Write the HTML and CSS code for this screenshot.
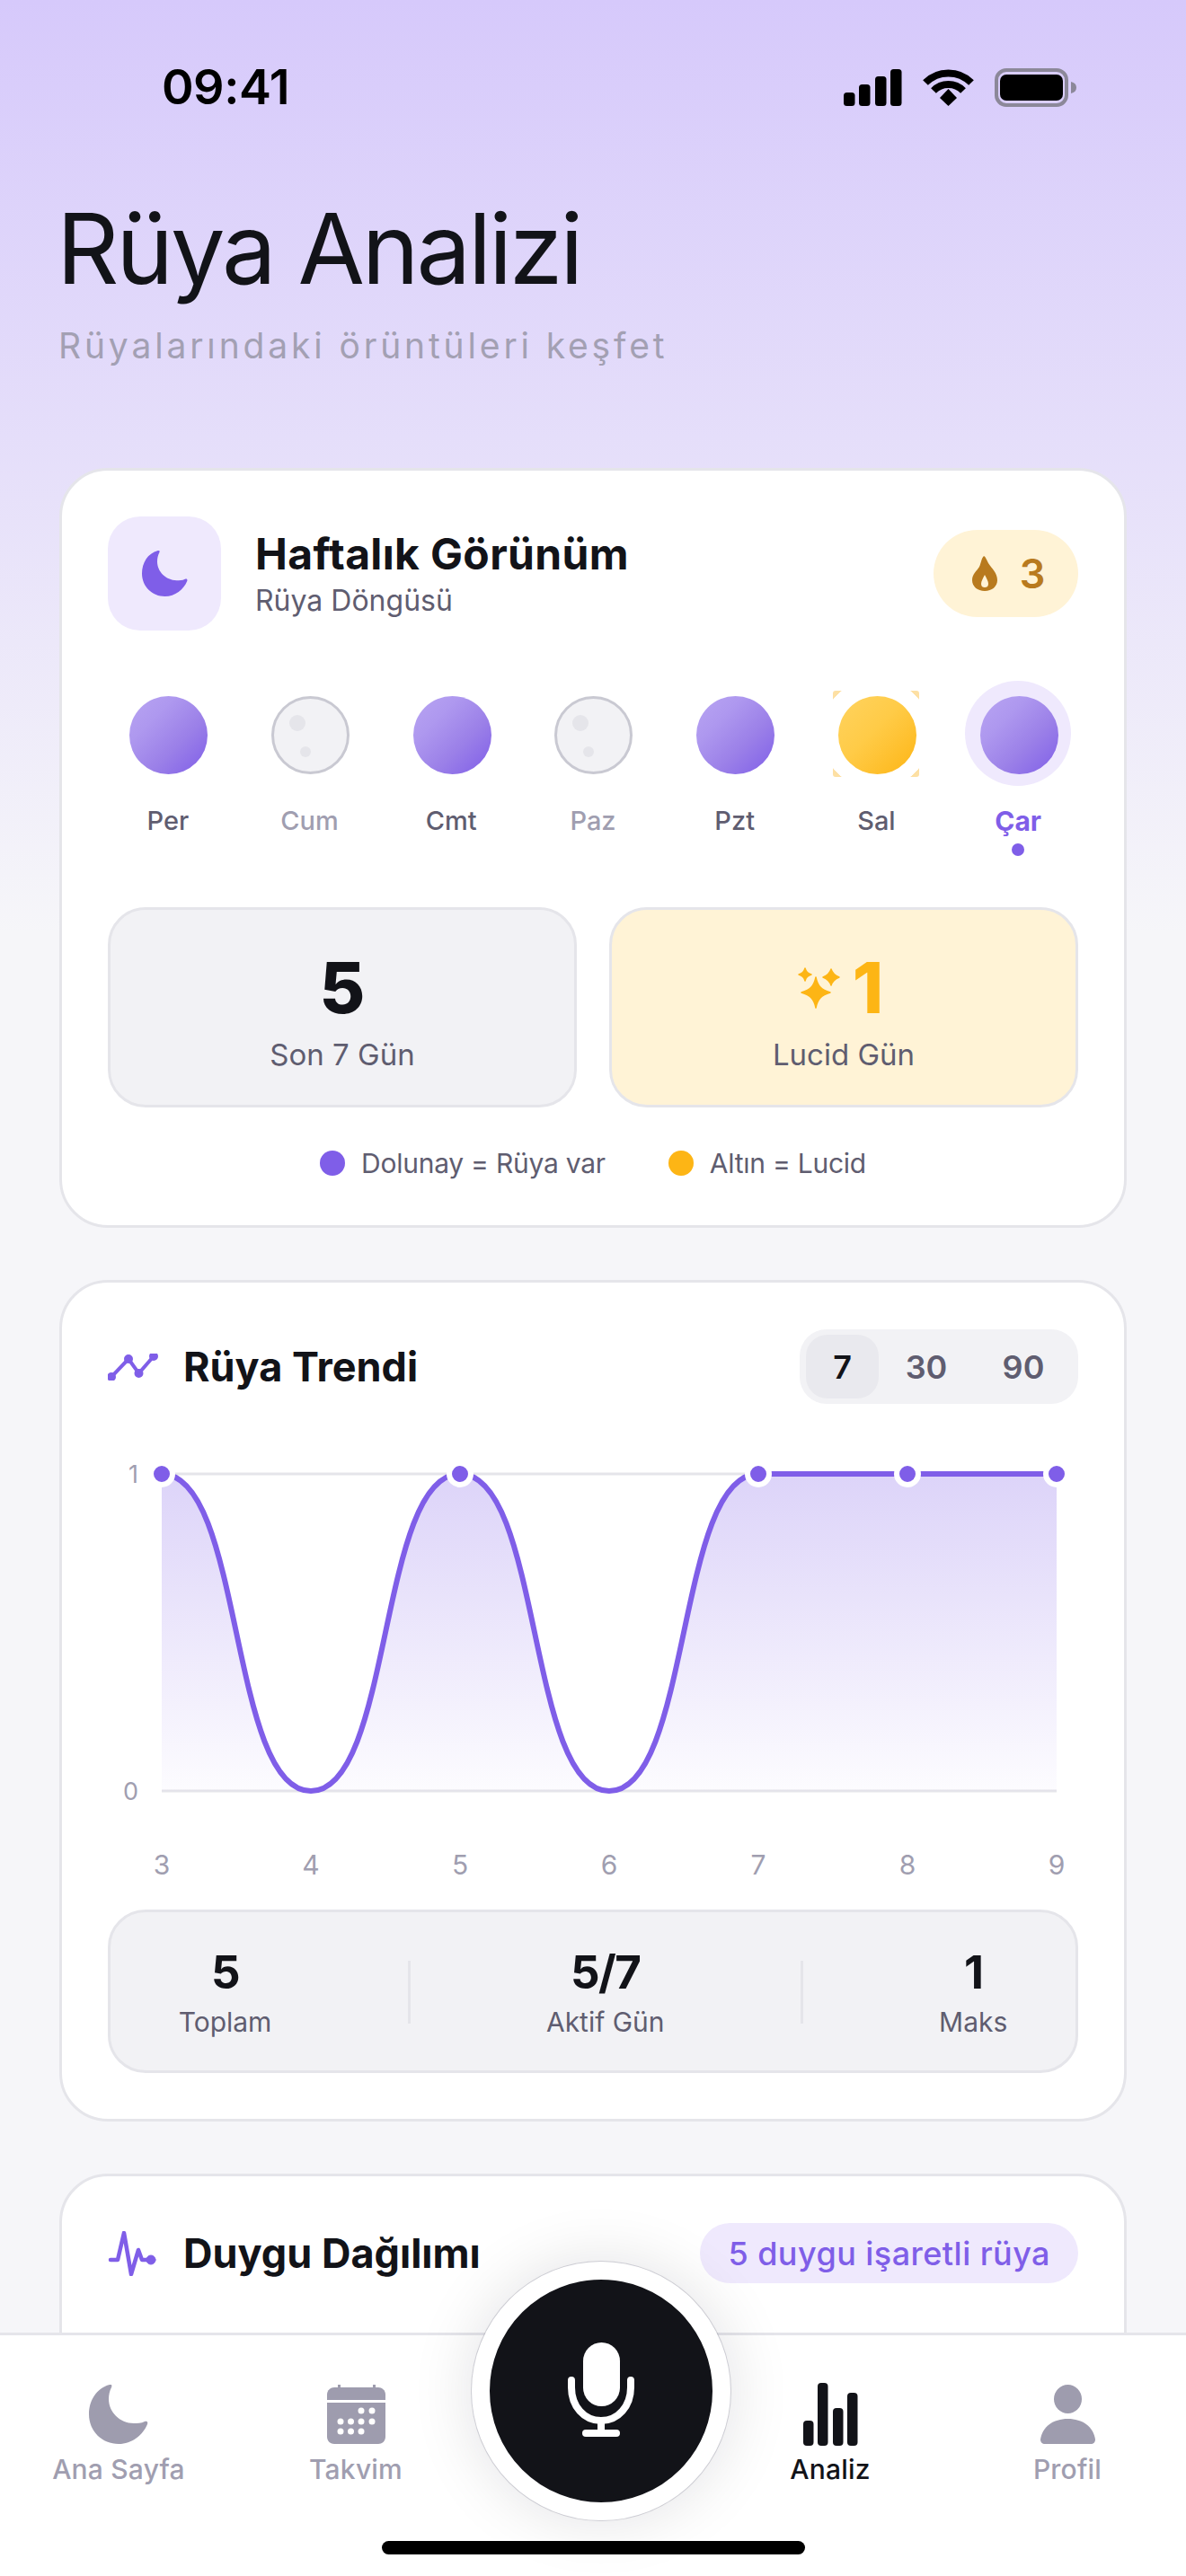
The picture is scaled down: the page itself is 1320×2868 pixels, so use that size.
FILE: index.html
```html
<!DOCTYPE html>
<html lang="tr">
<head>
  <meta charset="UTF-8" />
  <meta name="viewport" content="width=device-width, initial-scale=1" />
  <title>Rüya Analizi</title>
  <link rel="stylesheet" href="styles.css">
</head>
<body>
  <div class="screen">
    <div class="status-bar">
      <span class="time">09:41</span>
      <div class="status-icons">
        <svg width="65" height="41" viewBox="0 0 65 41" fill="#000">
          <rect x="0" y="26" width="12.5" height="15" rx="3.5"/>
          <rect x="17" y="17" width="12.5" height="24" rx="3.5"/>
          <rect x="35" y="8" width="12.5" height="33" rx="3.5"/>
          <rect x="52" y="0" width="12.5" height="41" rx="3.5"/>
        </svg>
        <svg width="57" height="41" viewBox="0 0 57 41" fill="none" stroke="#000" stroke-width="8">
          <path d="M3 15 A36 36 0 0 1 54 15"/>
          <path d="M12 24 A23 23 0 0 1 45 24"/>
          <path d="M19 32 L28.5 22 L38 32 L28.5 41 Z" fill="#000" stroke="none"/>
        </svg>
        <svg class="battery" width="91" height="43" viewBox="0 0 91 43">
          <rect x="2" y="2" width="78" height="39" rx="11" fill="none" stroke="#8c8899" stroke-width="4"/>
          <rect x="6" y="7" width="70" height="29" rx="7" fill="#000"/>
          <path d="M85 15 C89 16 91 18 91 21.5 C91 25 89 27 85 28 Z" fill="#8c8899"/>
        </svg>
      </div>
    </div>

    <header class="page-head">
      <h1>Rüya Analizi</h1>
      <p>Rüyalarındaki örüntüleri keşfet</p>
    </header>

    <section class="card">
      <div class="card-head">
        <div class="week-title">
          <div class="icon-box">
            <svg width="51" height="51" viewBox="0 0 66 66" fill="#7f5ee8">
              <path d="M23 0 C8 4 0 18 0 33 C0 52 15 66 33 66 C48 66 60 56 65 44 C66 41 64 40 62 41 C58 43 54 43 50 43 C34 43 22 30 22 16 C22 11 23 7 25 3 C26 1 25 -1 23 0 Z"/>
            </svg>
          </div>
          <div>
            <h2 class="week-name">Haftalık Görünüm</h2>
            <div class="subtitle">Rüya Döngüsü</div>
          </div>
        </div>
        <div class="streak">
          <svg width="28" height="39" viewBox="0 0 28 39">
            <path fill-rule="evenodd" fill="#b87a1e" d="M13 0 C15 1 16 4 18 8 C22 14 28 19 28 27 C28 34 22 39 14 39 C6 39 0 34 0 27 C0 20 5 17 8 12 C10 8 10 3 13 0 Z M14 21 C12 25 10 28 10 31 C10 34 12 35 14 35 C16 35 18 34 18 31 C18 28 16 25 14 21 Z"/>
          </svg>
          <span>3</span>
        </div>
      </div>

      <div class="days">
        <div class="day"><div class="moon full"></div><span class="day-name">Per</span></div>
        <div class="day"><div class="moon empty"></div><span class="day-name muted">Cum</span></div>
        <div class="day"><div class="moon full"></div><span class="day-name">Cmt</span></div>
        <div class="day"><div class="moon empty"></div><span class="day-name muted">Paz</span></div>
        <div class="day"><div class="moon full"></div><span class="day-name">Pzt</span></div>
        <div class="day"><div class="moon gold"></div><span class="day-name">Sal</span></div>
        <div class="day today"><div class="moon full"></div><span class="day-name">Çar</span><i class="today-dot"></i></div>
      </div>

      <div class="stats">
        <div class="stat">
          <div class="stat-num">5</div>
          <div class="stat-label">Son 7 Gün</div>
        </div>
        <div class="stat lucid">
          <div class="stat-num">
            <svg width="50" height="46" viewBox="0 0 50 46" fill="#fdb515" stroke="#fdb515" stroke-width="1.5" stroke-linejoin="round">
              <path d="M21 11 C23 21 27 25 37 28 C27 31 23 35 21 45 C19 35 15 31 5 28 C15 25 19 21 21 11 Z"/>
              <path d="M9 1 C10 5 12 7 16 8 C12 9 10 11 9 15 C8 11 6 9 2 8 C6 7 8 5 9 1 Z"/>
              <path d="M38 2 C39.500 7 42 9 47 11 C42 13 39.500 15 38 20 C36.500 15 34 13 29 11 C34 9 36.500 7 38 2 Z"/>
            </svg>
            <span>1</span>
          </div>
          <div class="stat-label">Lucid Gün</div>
        </div>
      </div>

      <div class="legend">
        <span class="legend-item"><i class="legend-dot purple"></i>Dolunay = Rüya var</span>
        <span class="legend-item"><i class="legend-dot yellow"></i>Altın = Lucid</span>
      </div>
    </section>

    <section class="card">
      <div class="card-head">
        <div class="card-title">
          <svg width="56" height="30" viewBox="0 0 56 30" fill="#7f5ee8" stroke="#7f5ee8" stroke-width="4">
            <polyline points="4,26 23,6 34.500,22 51,3" fill="none"/>
            <circle cx="4" cy="26" r="3" /><circle cx="23" cy="6" r="3"/><circle cx="34.500" cy="22" r="3"/><circle cx="51" cy="3" r="3"/>
          </svg>
          <h2>Rüya Trendi</h2>
        </div>
        <div class="range">
          <span class="range-btn active">7</span>
          <span class="range-btn mid">30</span>
          <span class="range-btn wide">90</span>
        </div>
      </div>

      <svg class="chart" width="1080" height="510" viewBox="0 0 1080 510">
        <defs>
          <linearGradient id="areaFill" x1="0" y1="0" x2="0" y2="1">
            <stop offset="0" stop-color="#7f5ee8" stop-opacity="0.27"/>
            <stop offset="1" stop-color="#7f5ee8" stop-opacity="0.02"/>
          </linearGradient>
        </defs>
        <line x1="60" y1="48" x2="1056" y2="48" stroke="#e5e5ea" stroke-width="3"/>
        <line x1="60" y1="401" x2="1056" y2="401" stroke="#e5e5ea" stroke-width="3"/>
        <path d="M60 48 C151 48 135 401 226 401 C317 401 301 48 392 48 C483 48 467 401 558 401 C649 401 633 48 724 48 L1056 48 L1056 401 L60 401 Z" fill="url(#areaFill)"/>
        <path d="M60 48 C151 48 135 401 226 401 C317 401 301 48 392 48 C483 48 467 401 558 401 C649 401 633 48 724 48 L1056 48" fill="none" stroke="#7f5ee8" stroke-width="6"/>
        <g fill="#7f5ee8" stroke="#fff" stroke-width="6">
          <circle cx="60" cy="48" r="12"/>
          <circle cx="392" cy="48" r="12"/>
          <circle cx="724" cy="48" r="12"/>
          <circle cx="890" cy="48" r="12"/>
          <circle cx="1056" cy="48" r="12"/>
        </g>
        <g class="axis-y">
          <text x="34" y="58">1</text>
          <text x="34" y="411">0</text>
        </g>
        <g class="axis-x">
          <text x="60" y="494">3</text>
          <text x="226" y="494">4</text>
          <text x="392" y="494">5</text>
          <text x="558" y="494">6</text>
          <text x="724" y="494">7</text>
          <text x="890" y="494">8</text>
          <text x="1056" y="494">9</text>
        </g>
      </svg>

      <div class="summary">
        <div class="summary-item">
          <div class="summary-num">5</div>
          <div class="summary-label">Toplam</div>
        </div>
        <div class="summary-line"></div>
        <div class="summary-item">
          <div class="summary-num">5/7</div>
          <div class="summary-label">Aktif Gün</div>
        </div>
        <div class="summary-line"></div>
        <div class="summary-item">
          <div class="summary-num">1</div>
          <div class="summary-label">Maks</div>
        </div>
      </div>
    </section>

    <section class="card">
      <div class="card-head">
        <div class="card-title">
          <svg width="56" height="50" viewBox="0 0 56 50" fill="none" stroke="#7f5ee8" stroke-width="4.500" stroke-linecap="round" stroke-linejoin="round">
            <polyline points="3,32 11,32 18,2 26,48 34,21 38,32 46,32"/>
            <circle cx="48" cy="32" r="5" fill="#7f5ee8" stroke-width="1"/>
          </svg>
          <h2>Duygu Dağılımı</h2>
        </div>
        <div class="mood-count">5 duygu işaretli rüya</div>
      </div>
    </section>

    <nav class="tab-bar">
      <a class="tab">
        <div class="tab-icon">
          <svg width="66" height="66" viewBox="0 0 66 66" fill="#9e9cae">
            <path d="M23 0 C8 4 0 18 0 33 C0 52 15 66 33 66 C48 66 60 56 65 44 C66 41 64 40 62 41 C58 43 54 43 50 43 C34 43 22 30 22 16 C22 11 23 7 25 3 C26 1 25 -1 23 0 Z"/>
          </svg>
        </div>
        <span>Ana Sayfa</span>
      </a>
      <a class="tab">
        <div class="tab-icon">
          <svg width="65" height="66" viewBox="0 0 65 66" fill="#9e9cae">
            <rect x="12" y="0" width="3" height="6"/>
            <rect x="51" y="0" width="3" height="6"/>
            <path d="M0 17 V11 C0 6 4 3 8 3 H57 C61 3 65 6 65 11 V17 Z"/>
            <path fill-rule="evenodd" d="M0 20 H65 V58 C65 63 61 66 57 66 H8 C4 66 0 63 0 58 Z"/>
            <g fill="#fff">
              <circle cx="38" cy="29" r="3.500"/><circle cx="50" cy="29" r="3.500"/>
              <circle cx="15" cy="41" r="3.500"/><circle cx="26.500" cy="41" r="3.500"/><circle cx="38" cy="41" r="3.500"/><circle cx="50" cy="41" r="3.500"/>
              <circle cx="15" cy="52" r="3.500"/><circle cx="26.500" cy="52" r="3.500"/><circle cx="38" cy="52" r="3.500"/>
            </g>
          </svg>
        </div>
        <span>Takvim</span>
      </a>
      <div></div>
      <a class="tab active">
        <div class="tab-icon">
          <svg width="61" height="70" viewBox="0 0 61 70" fill="#121318">
            <rect x="0" y="42" width="11.500" height="28" rx="4"/>
            <rect x="16" y="0" width="11.500" height="70" rx="4"/>
            <rect x="33" y="28" width="11.500" height="42" rx="4"/>
            <rect x="49" y="11" width="11.500" height="59" rx="4"/>
          </svg>
        </div>
        <span>Analiz</span>
      </a>
      <a class="tab">
        <div class="tab-icon">
          <svg width="61" height="66" viewBox="0 0 61 66" fill="#9e9cae">
            <ellipse cx="30.500" cy="16" rx="15.500" ry="16"/>
            <path d="M0 61 C2 47 14 38 30.500 38 C47 38 59 47 61 61 C61 64 59 66 56 66 H5 C2 66 0 64 0 61 Z"/>
          </svg>
        </div>
        <span>Profil</span>
      </a>
      <button class="mic-btn" aria-label="Kaydet">
        <svg width="74" height="105" viewBox="0 0 74 105" fill="none" stroke="#fff" stroke-width="8" stroke-linecap="round">
          <rect x="17" y="0" width="41" height="71" rx="20.500" fill="#fff" stroke="none"/>
          <path d="M4 42 V50 C4 71 18 87 37 87 C56 87 70 71 70 50 V42"/>
          <path d="M37 87 V101"/>
          <path d="M20 101 H54"/>
        </svg>
      </button>
      <div class="home-bar"></div>
    </nav>
  </div>
</body>
</html>
```

FILE: styles.css
```css
* {
  box-sizing: border-box;
}
body {
  margin: 0;
  font-family: Inter, 'Noto Sans', sans-serif;
  color: #121318;
}

.screen {
  position: relative;
  width: 1320px;
  height: 2868px;
  overflow: hidden;
  background: linear-gradient(180deg, #d6c9fb 0, #f6f6f9 1040px);
}

/* status bar */
.status-bar {
  display: flex;
  justify-content: space-between;
  align-items: center;
  height: 118px;
  padding: 75px 122px 0 180px;
}
.time {
  font-size: 54px;
  font-weight: 600;
  line-height: 43px;
  letter-spacing: -0.5px;
  color: #000;
}
.status-icons {
  display: flex;
  align-items: flex-end;
  gap: 23px;
}
.battery {
  margin-bottom: -1px;
}

/* page title */
.page-head {
  padding: 94px 63px 0;
}
.page-head h1 {
  margin: 0;
  font-size: 108px;
  font-weight: 400;
  line-height: 130px;
  letter-spacing: -3.2px;
}
.page-head p {
  margin: 19px 0 0 2px;
  font-size: 39px;
  line-height: 48px;
  letter-spacing: 3.85px;
  color: #a3a0b3;
}

/* cards */
.card {
  margin: 112px 66px 0;
  padding: 51px;
  background: #fff;
  border: 3px solid #e5e5ea;
  border-radius: 54px;
}
.card + .card {
  margin-top: 58px;
  padding-top: 52px;
}
.card:last-of-type {
  height: 400px;
}
.card-head {
  display: flex;
  justify-content: space-between;
  align-items: center;
}
.card h2 {
  margin: 0;
  font-size: 45px;
  font-weight: 700;
  line-height: 58px;
}
.card h2.week-name {
  font-size: 48px;
  letter-spacing: 0.35px;
}
.card-title {
  display: flex;
  align-items: center;
  gap: 28px;
}
.week-title {
  display: flex;
  align-items: center;
  gap: 38px;
}
.icon-box {
  display: flex;
  align-items: center;
  justify-content: center;
  width: 126px;
  height: 127px;
  background: #efe9fd;
  border-radius: 36px;
}
.subtitle {
  margin-top: 3px;
  font-size: 32px;
  line-height: 40px;
  color: #5f5d70;
}
.streak {
  display: flex;
  align-items: center;
  justify-content: center;
  gap: 25px;
  width: 161px;
  height: 97px;
  padding-left: 6px;
  background: #fff3d6;
  border-radius: 49px;
  font-size: 45px;
  font-weight: 600;
  color: #b87a1e;
}

/* week moons */
.days {
  display: grid;
  grid-template-columns: repeat(7, 1fr);
  gap: 24px;
  margin-top: 73px;
  isolation: isolate;
}
.day {
  display: flex;
  flex-direction: column;
  align-items: center;
}
.moon {
  position: relative;
  width: 87px;
  height: 87px;
  margin-left: 2px;
  border-radius: 50%;
}
.moon.full {
  background: linear-gradient(135deg, #b8a4f2 0, #ae98ef 30%, #9b80e8 62%, #7f5ee8 100%);
}
.moon.gold {
  background: linear-gradient(135deg, #ffd35f 0, #ffcb47 45%, #fdb515 100%);
}
.moon.gold::before {
  content: "";
  position: absolute;
  inset: -6px -3px -3px -6px;
  z-index: -1;
  border-radius: 3px;
  background: radial-gradient(circle at center, #fff 61px, #fde0a4 61.500px);
}
.moon.empty {
  background: #f2f2f5;
  border: 3px solid #c9c9d2;
}
.moon.empty::before,
.moon.empty::after {
  content: "";
  position: absolute;
  border-radius: 50%;
  background: #e5e5ea;
}
.moon.empty::before {
  left: 17px;
  top: 18px;
  width: 18px;
  height: 18px;
}
.moon.empty::after {
  left: 29px;
  top: 53px;
  width: 12px;
  height: 12px;
}
.today .moon::before {
  content: "";
  position: absolute;
  inset: -17px -14px -13px -17px;
  z-index: -1;
  border-radius: 50%;
  background: #efe9fd;
}
.day-name {
  margin-top: 34px;
  font-size: 29px;
  font-weight: 500;
  line-height: 36px;
  color: #5f5d70;
}
.day-name.muted {
  color: #a09eb0;
}
.today .day-name {
  font-size: 30px;
  font-weight: 700;
  color: #7f5ee8;
}
.today-dot {
  display: block;
  width: 14px;
  height: 14px;
  margin-top: 7px;
  border-radius: 50%;
  background: #7f5ee8;
}

/* stat boxes */
.stats {
  display: grid;
  grid-template-columns: 1fr 1fr;
  gap: 36px;
  margin-top: 57px;
}
.stat {
  display: flex;
  flex-direction: column;
  align-items: center;
  height: 223px;
  padding-top: 40px;
  background: #f2f2f5;
  border: 3px solid #e5e5ea;
  border-radius: 42px;
}
.stat.lucid {
  background: #fff3d6;
}
.stat-num {
  display: flex;
  align-items: center;
  gap: 12px;
  font-size: 78px;
  font-weight: 800;
  line-height: 94px;
}
.lucid .stat-num {
  margin-left: -8px;
  color: #fdb515;
}
.stat-label {
  margin-top: 7px;
  font-size: 33px;
  line-height: 40px;
  color: #5f5d70;
}
.legend {
  display: flex;
  justify-content: center;
  gap: 70px;
  margin-top: 44px;
}
.legend-item {
  display: flex;
  align-items: center;
  gap: 18px;
  font-size: 30px;
  line-height: 36px;
  letter-spacing: -0.25px;
  color: #5f5d70;
}
.legend-dot {
  width: 28px;
  height: 28px;
  border-radius: 50%;
}
.legend-dot.purple {
  background: #7f5ee8;
}
.legend-dot.yellow {
  background: #fdb515;
}

/* trend card */
.range {
  display: flex;
  height: 83px;
  padding: 6px 6px 6px 7px;
  background: #f2f2f5;
  border-radius: 30px;
}
.range-btn {
  display: flex;
  align-items: center;
  justify-content: center;
  width: 81px;
  border-radius: 24px;
  font-size: 36px;
  font-weight: 600;
  color: #5f5d70;
}
.range-btn.mid {
  width: 106px;
}
.range-btn.wide {
  width: 110px;
}
.range-btn.active {
  background: #e9e9ee;
  color: #121318;
}
.chart {
  display: block;
  margin: 30px 0 23px;
}
.axis-y text {
  font-size: 27px;
  fill: #a09eb0;
  text-anchor: end;
}
.axis-x text {
  font-size: 30px;
  fill: #a09eb0;
  text-anchor: middle;
}
.summary {
  display: flex;
  justify-content: space-around;
  align-items: center;
  height: 182px;
  background: #f2f2f5;
  border: 3px solid #e5e5ea;
  border-radius: 42px;
}
.summary-item {
  text-align: center;
}
.summary-num {
  font-size: 51px;
  font-weight: 700;
  line-height: 62px;
  letter-spacing: -1.5px;
}
.summary-label {
  margin-top: 6px;
  font-size: 30px;
  line-height: 36px;
  color: #5f5d70;
}
.summary-line {
  width: 3px;
  height: 70px;
  margin-top: 1px;
  background: #e5e5ea;
}
.mood-count {
  display: flex;
  align-items: center;
  height: 67px;
  padding: 0 31px;
  background: #efe9fd;
  border-radius: 34px;
  font-size: 36px;
  font-weight: 500;
  letter-spacing: 0.45px;
  color: #7f5ee8;
}

/* bottom tabs */
.tab-bar {
  position: absolute;
  left: 0;
  right: 0;
  bottom: 0;
  display: grid;
  grid-template-columns: repeat(5, 1fr);
  height: 271px;
  padding-top: 53px;
  background: #fff;
  border-top: 3px solid #e5e5ea;
}
.tab {
  display: flex;
  flex-direction: column;
  align-items: center;
  font-size: 30px;
  font-weight: 500;
  line-height: 36px;
  letter-spacing: 0.2px;
  color: #a09eb0;
}
.tab.active {
  color: #121318;
}
.tab-icon {
  display: flex;
  align-items: center;
  justify-content: center;
  height: 70px;
  margin-bottom: 8px;
}
.mic-btn {
  position: absolute;
  left: 525px;
  top: -82px;
  display: flex;
  align-items: center;
  justify-content: center;
  width: 288px;
  height: 288px;
  padding: 0 0 4px;
  background: #121318;
  border: 20px solid #fff;
  border-radius: 50%;
  box-shadow: 0 0 0 1px rgba(120, 120, 140, 0.3), 0 0 70px rgba(18, 19, 24, 0.12);
}
.home-bar {
  position: absolute;
  left: 425px;
  bottom: 24px;
  width: 471px;
  height: 15px;
  background: #000;
  border-radius: 8px;
}
```
